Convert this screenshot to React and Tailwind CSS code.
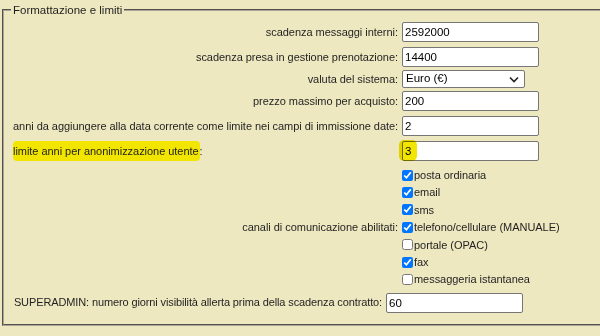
import React from 'react'

const font = "font-['Liberation_Sans',Arial,sans-serif]"

const TextRow = ({ label, value, mt }) => (
  <div className={`flex items-center ${mt}`}>
    <div className='w-[386px] text-right pr-[1px] whitespace-nowrap'>{label}</div>
    <input
      readOnly
      value={value}
      className='ml-[3px] w-[137px] h-[20px] bg-white border border-[#767676] rounded-[2px] px-[2px] text-[11.5px] tracking-normal text-black outline-none'
    />
  </div>
)

const canali = [
  ['posta ordinaria', true],
  ['email', true],
  ['sms', true],
  ['telefono/cellulare (MANUALE)', true],
  ['portale (OPAC)', false],
  ['fax', true],
  ['messaggeria istantanea', false],
]

const App = () => {
  return (
    <div className={`w-[600px] h-[336px] overflow-hidden bg-[#eee8c1] text-[#1f1f1f] text-[11px] tracking-[-0.04px] ${font} pt-[3px]`}>
      <fieldset className='ml-[2px] w-[640px] border-2 border-[#a8a49a] [border-style:groove] pl-[9px] pb-[11px]'>
        <legend className='ml-[-2px] px-[2px] text-[11.5px] leading-[14px] tracking-normal'>Formattazione e limiti</legend>

        <div className='flex flex-col pt-[5px]'>
          <TextRow label='scadenza messaggi interni:' value='2592000' mt='mt-0' />
          <TextRow label='scadenza presa in gestione prenotazione:' value='14400' mt='mt-[5px]' />

          <div className='flex items-center mt-[3px]'>
            <div className='w-[386px] text-right pr-[1px]'>valuta del sistema:</div>
            <div className='ml-[3px] w-[123px] h-[18px] bg-white border border-[#767676] rounded-[2px] flex items-center justify-between pl-[3px] pr-[5px] text-[11.5px] tracking-normal text-black'>
              <span>Euro (€)</span>
              <svg width='10' height='7' viewBox='0 0 10 7'>
                <path d='M1 1.5 L5 5.5 L9 1.5' fill='none' stroke='#222' strokeWidth='1.6' />
              </svg>
            </div>
          </div>

          <TextRow label='prezzo massimo per acquisto:' value='200' mt='mt-[3px]' />
          <TextRow label='anni da aggiungere alla data corrente come limite nei campi di immissione date:' value='2' mt='mt-[5px]' />

          <div className='flex items-center mt-[5px]'>
            <div className='w-[386px] text-left whitespace-nowrap'>
              <span className='bg-[#f2e600] rounded-[4px] py-[4px] pr-[1px]'>limite anni per anonimizzazione utente</span>:
            </div>
            <div className='relative ml-[3px]'>
              <input
                readOnly
                value='3'
                className='w-[137px] h-[20px] bg-white border border-[#767676] rounded-[2px] px-[2px] text-[11.5px] tracking-normal text-black outline-none'
              />
              <div className='absolute left-[-3px] top-[-1px] w-[18px] h-[21px] bg-[#f2e600] rounded-[5px] mix-blend-multiply' />
            </div>
          </div>

          <div className='flex items-center mt-[5.5px]'>
            <div className='w-[386px] text-right pr-[1px]'>canali di comunicazione abilitati:</div>
            <div className='flex flex-col ml-[3px]'>
              {canali.map(([name, on]) => (
                <label key={name} className='flex items-center h-[17.4px] whitespace-nowrap'>
                  <input type='checkbox' readOnly checked={on} className='w-[11px] h-[11px] m-0 mr-[1px] accent-[#0075ff]' />
                  <span>{name}</span>
                </label>
              ))}
            </div>
          </div>

          <div className='flex items-center mt-[4.5px]'>
            <div className='w-[370px] text-right pr-[1px] whitespace-nowrap tracking-[-0.12px]'>SUPERADMIN: numero giorni visibilità allerta prima della scadenza contratto:</div>
            <input
              readOnly
              value='60'
              className='ml-[3px] w-[137px] h-[20px] bg-white border border-[#767676] rounded-[2px] px-[2px] text-[11.5px] tracking-normal text-black outline-none'
            />
          </div>
        </div>
      </fieldset>
    </div>
  )
}

export default App
